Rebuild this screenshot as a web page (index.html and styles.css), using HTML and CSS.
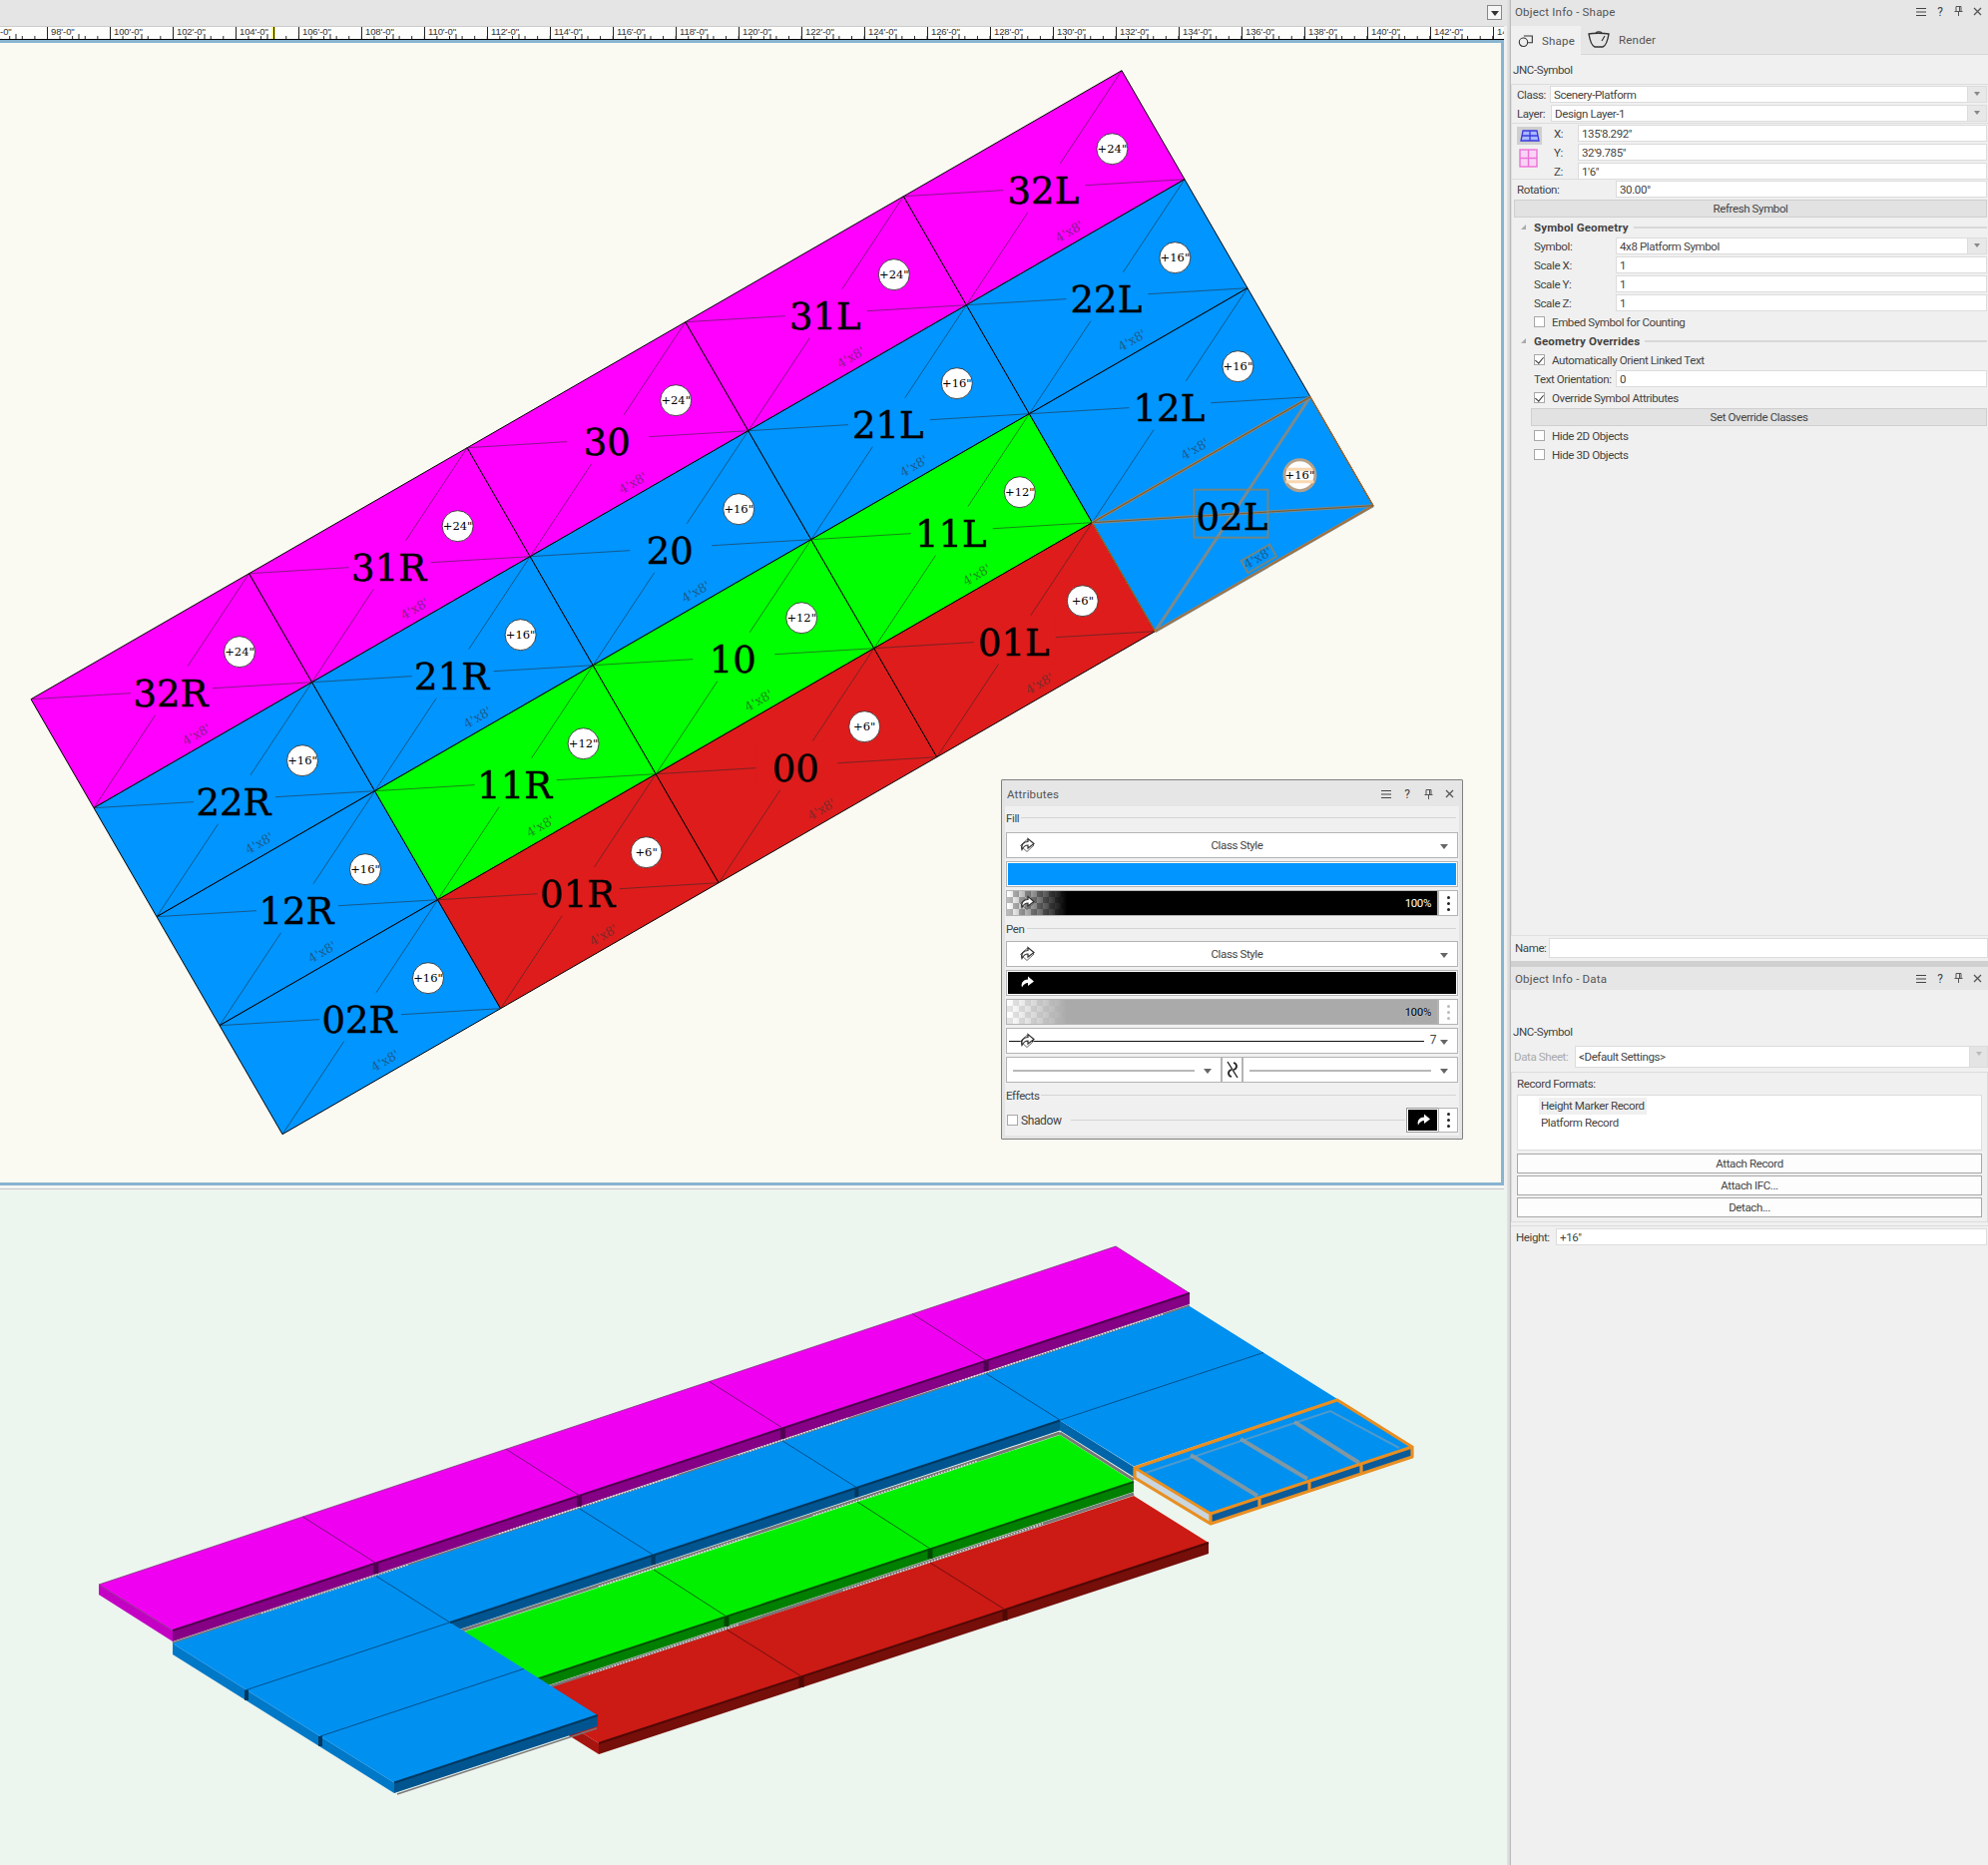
FILE: index.html
```html
<!DOCTYPE html>
<html lang="en">
<head>
    <meta charset="UTF-8">
    <title>Platform layout - Object Info</title>
    <link rel="stylesheet" href="styles.css">
</head>
<body>
<svg class="defs" width="0" height="0">
    <defs>
        <g id="cellBase">
            <polygon class="cell-face" points="0,0 218.600,-126 281.600,-17 63,109"/>
            <line class="cell-diag" x1="0" y1="0" x2="281.600" y2="-17"/>
            <line class="cell-diag" x1="218.600" y1="-126" x2="63" y2="109"/>
            <rect class="cell-knock" x="100" y="-33" width="82" height="49"/>
        </g>
        <g id="cellTag"><circle class="cell-ring" cx="209" cy="-47.500" r="15.500"/></g>
        <g id="byClass">
            <path d="M1.500 8.500 8 2.500 15 8 8 14.500Z" fill="none" stroke="#666" stroke-width="1"/>
            <path d="M3 12.500C1.500 7.500 5 4.500 9 4.500V1.500L15 6.500 9 11V8C6.500 8 4.500 9.500 3 12.500Z" fill="#fff" stroke="#333" stroke-width="1.200"/>
        </g>
        <g id="byClassWhite">
            <path d="M3 12.500C1.500 7.500 5 4.500 9 4.500V1.500L15 6.500 9 11V8C6.500 8 4.500 9.500 3 12.500Z" fill="#fff"/>
        </g>
        <g id="menuIcon"><path d="M0 1.500H10M0 5H10M0 8.500H10" stroke="#444" stroke-width="1.100" fill="none"/></g>
        <g id="pinIcon"><path d="M2 0.500H7V5.500H2ZM0.500 5.500H8.500M4.500 5.500V10M5.500 0.500V5" stroke="#555" stroke-width="1" fill="none"/></g>
        <g id="closeIcon"><path d="M1 1 8 8M8 1 1 8" stroke="#555" stroke-width="1.300" fill="none"/></g>
    </defs>
</svg>

<div class="app">
    <div class="views">
        <div class="topbar"><span class="topbar-btn"></span></div>
        <div class="ruler">
            <span>96'-0"</span><span>98'-0"</span><span>100'-0"</span><span>102'-0"</span><span>104'-0"</span><span>106'-0"</span><span>108'-0"</span><span>110'-0"</span><span>112'-0"</span><span>114'-0"</span><span>116'-0"</span><span>118'-0"</span><span>120'-0"</span><span>122'-0"</span><span>124'-0"</span><span>126'-0"</span><span>128'-0"</span><span>130'-0"</span><span>132'-0"</span><span>134'-0"</span><span>136'-0"</span><span>138'-0"</span><span>140'-0"</span><span>142'-0"</span><span>144'-0"</span>
            <i class="ruler-mark"></i>
        </div>
        <div class="plan">
            <svg class="plan-svg" viewBox="0 43 1504 1142" width="1504" height="1142">
                <g class="cell mag" transform="translate(31 700.700)"><use href="#cellBase"/><use href="#cellTag"/><text class="lbl" x="140" y="7">32R</text><text class="tag" x="209" y="-43.500">+24"</text><text class="size" transform="translate(168 39) rotate(-30)">4'x8'</text></g>
                <g class="cell mag" transform="translate(249.600 574.700)"><use href="#cellBase"/><use href="#cellTag"/><text class="lbl" x="140" y="7">31R</text><text class="tag" x="209" y="-43.500">+24"</text><text class="size" transform="translate(168 39) rotate(-30)">4'x8'</text></g>
                <g class="cell mag" transform="translate(468.200 448.700)"><use href="#cellBase"/><use href="#cellTag"/><text class="lbl" x="140" y="7">30</text><text class="tag" x="209" y="-43.500">+24"</text><text class="size" transform="translate(168 39) rotate(-30)">4'x8'</text></g>
                <g class="cell mag" transform="translate(686.800 322.700)"><use href="#cellBase"/><use href="#cellTag"/><text class="lbl" x="140" y="7">31L</text><text class="tag" x="209" y="-43.500">+24"</text><text class="size" transform="translate(168 39) rotate(-30)">4'x8'</text></g>
                <g class="cell mag" transform="translate(905.400 196.700)"><use href="#cellBase"/><use href="#cellTag"/><text class="lbl" x="140" y="7">32L</text><text class="tag" x="209" y="-43.500">+24"</text><text class="size" transform="translate(168 39) rotate(-30)">4'x8'</text></g>

                <g class="cell blu" transform="translate(94 809.700)"><use href="#cellBase"/><use href="#cellTag"/><text class="lbl" x="140" y="7">22R</text><text class="tag" x="209" y="-43.500">+16"</text><text class="size" transform="translate(168 39) rotate(-30)">4'x8'</text></g>
                <g class="cell blu" transform="translate(312.600 683.700)"><use href="#cellBase"/><use href="#cellTag"/><text class="lbl" x="140" y="7">21R</text><text class="tag" x="209" y="-43.500">+16"</text><text class="size" transform="translate(168 39) rotate(-30)">4'x8'</text></g>
                <g class="cell blu" transform="translate(531.200 557.700)"><use href="#cellBase"/><use href="#cellTag"/><text class="lbl" x="140" y="7">20</text><text class="tag" x="209" y="-43.500">+16"</text><text class="size" transform="translate(168 39) rotate(-30)">4'x8'</text></g>
                <g class="cell blu" transform="translate(749.800 431.700)"><use href="#cellBase"/><use href="#cellTag"/><text class="lbl" x="140" y="7">21L</text><text class="tag" x="209" y="-43.500">+16"</text><text class="size" transform="translate(168 39) rotate(-30)">4'x8'</text></g>
                <g class="cell blu" transform="translate(968.400 305.700)"><use href="#cellBase"/><use href="#cellTag"/><text class="lbl" x="140" y="7">22L</text><text class="tag" x="209" y="-43.500">+16"</text><text class="size" transform="translate(168 39) rotate(-30)">4'x8'</text></g>

                <g class="cell blu" transform="translate(157 918.700)"><use href="#cellBase"/><use href="#cellTag"/><text class="lbl" x="140" y="7">12R</text><text class="tag" x="209" y="-43.500">+16"</text><text class="size" transform="translate(168 39) rotate(-30)">4'x8'</text></g>
                <g class="cell grn" transform="translate(375.600 792.700)"><use href="#cellBase"/><use href="#cellTag"/><text class="lbl" x="140" y="7">11R</text><text class="tag" x="209" y="-43.500">+12"</text><text class="size" transform="translate(168 39) rotate(-30)">4'x8'</text></g>
                <g class="cell grn" transform="translate(594.200 666.700)"><use href="#cellBase"/><use href="#cellTag"/><text class="lbl" x="140" y="7">10</text><text class="tag" x="209" y="-43.500">+12"</text><text class="size" transform="translate(168 39) rotate(-30)">4'x8'</text></g>
                <g class="cell grn" transform="translate(812.800 540.700)"><use href="#cellBase"/><use href="#cellTag"/><text class="lbl" x="140" y="7">11L</text><text class="tag" x="209" y="-43.500">+12"</text><text class="size" transform="translate(168 39) rotate(-30)">4'x8'</text></g>
                <g class="cell blu" transform="translate(1031.400 414.700)"><use href="#cellBase"/><use href="#cellTag"/><text class="lbl" x="140" y="7">12L</text><text class="tag" x="209" y="-43.500">+16"</text><text class="size" transform="translate(168 39) rotate(-30)">4'x8'</text></g>

                <g class="cell blu" transform="translate(220 1027.700)"><use href="#cellBase"/><use href="#cellTag"/><text class="lbl" x="140" y="7">02R</text><text class="tag" x="209" y="-43.500">+16"</text><text class="size" transform="translate(168 39) rotate(-30)">4'x8'</text></g>
                <g class="cell red" transform="translate(438.600 901.700)"><use href="#cellBase"/><use href="#cellTag"/><text class="lbl" x="140" y="7">01R</text><text class="tag" x="209" y="-43.500">+6"</text><text class="size" transform="translate(168 39) rotate(-30)">4'x8'</text></g>
                <g class="cell red" transform="translate(657.200 775.700)"><use href="#cellBase"/><use href="#cellTag"/><text class="lbl" x="140" y="7">00</text><text class="tag" x="209" y="-43.500">+6"</text><text class="size" transform="translate(168 39) rotate(-30)">4'x8'</text></g>
                <g class="cell red" transform="translate(875.800 649.700)"><use href="#cellBase"/><use href="#cellTag"/><text class="lbl" x="140" y="7">01L</text><text class="tag" x="209" y="-43.500">+6"</text><text class="size" transform="translate(168 39) rotate(-30)">4'x8'</text></g>

                <!-- selected platform -->
                <g class="cell blu picked" transform="translate(1094.400 523.700)">
                    <polygon class="cell-face" points="0,0 218.600,-126 281.600,-17 63,109"/>
                    <line class="pick-diag" x1="0" y1="0" x2="218.600" y2="-126"/>
                    <line class="pick-diag" x1="0" y1="0" x2="281.600" y2="-17"/>
                    <line class="pick-diag" x1="218.600" y1="-126" x2="63" y2="109"/>
                    <line class="pick-diag" x1="281.600" y1="-17" x2="63" y2="109"/>
                    <polygon class="pick-edge" points="0,0 218.600,-126 281.600,-17 63,109"/>
                    <path class="pick-dark" d="M0 0 218.600 -126M0 0 281.600 -17"/>
                    <rect class="pick-box" x="102" y="-33" width="74" height="48"/>
                    <text class="lbl" x="140" y="7">02L</text>
                    <g transform="translate(168 39) rotate(-30)"><rect class="pick-box" x="-16" y="-10" width="33" height="14"/><text class="size">4'x8'</text></g>
                    <circle class="pick-ring" cx="208" cy="-47.500" r="15.500"/>
                    <path class="pick-stripe" d="M195 -53.500H221M194 -41H222"/>
                    <text class="tag" x="208" y="-43.500">+16"</text>
                </g>
            </svg>

            <div class="attrs">
                <div class="palette-title attrs-title">
                    <span class="attrs-name">Attributes</span>
                    <span class="win-icons win-icons-wide">
                        <svg width="10" height="10"><use href="#menuIcon"/></svg><b>?</b>
                        <svg width="10" height="11"><use href="#pinIcon"/></svg>
                        <svg width="10" height="10"><use href="#closeIcon"/></svg>
                    </span>
                </div>
                <div class="attrs-body">
                    <div class="attr-head attr-head-first"><span>Fill</span><i></i></div>
                    <div class="attr-box attr-drop"><svg class="cls-ic" width="16" height="16"><use href="#byClass"/></svg><span class="attr-mid">Class Style</span><i class="caret"></i></div>
                    <div class="attr-box attr-color"><div class="swatch swatch-blue"></div></div>
                    <div class="attr-split">
                        <div class="attr-box attr-fade fade-black"><svg class="cls-ic" width="16" height="16"><use href="#byClass"/></svg><span class="pct">100%</span></div>
                        <div class="attr-box kebab"><i></i><i></i><i></i></div>
                    </div>
                    <div class="attr-head"><span>Pen</span><i></i></div>
                    <div class="attr-box attr-drop"><svg class="cls-ic" width="16" height="16"><use href="#byClass"/></svg><span class="attr-mid">Class Style</span><i class="caret"></i></div>
                    <div class="attr-box attr-color"><div class="swatch swatch-black"><svg class="cls-ic" width="16" height="16"><use href="#byClassWhite"/></svg></div></div>
                    <div class="attr-split">
                        <div class="attr-box attr-fade fade-grey"><span class="pct pct-out">100%</span></div>
                        <div class="attr-box kebab kebab-off"><i></i><i></i><i></i></div>
                    </div>
                    <div class="attr-box attr-weight"><span class="weight-line"></span><svg class="cls-ic" width="16" height="16"><use href="#byClass"/></svg><span class="weight-val">7</span><i class="caret"></i></div>
                    <div class="attr-ends">
                        <div class="attr-box attr-end"><span class="end-line"></span><i class="caret"></i></div>
                        <div class="attr-box end-link">
                            <svg width="14" height="20" viewBox="0 0 14 20"><path d="M2 2 12 18" fill="none" stroke="#222" stroke-width="1.400"/><path d="M8 3C12 4 12 9 8 10M6 17C2 16 2 11 6 10" fill="none" stroke="#222" stroke-width="1.800"/></svg>
                        </div>
                        <div class="attr-box attr-end"><span class="end-line"></span><i class="caret"></i></div>
                    </div>
                    <div class="attr-head"><span>Effects</span><i></i></div>
                    <div class="shadow-row">
                        <span class="check check-attr"></span><span class="shadow-name">Shadow</span><i class="shadow-line"></i>
                        <div class="attr-box shadow-swatch"><svg width="16" height="16"><use href="#byClassWhite"/></svg></div>
                        <div class="attr-box kebab"><i></i><i></i><i></i></div>
                    </div>
                </div>
            </div>
        </div>
        <div class="view-gap"></div>
        <div class="model">
            <svg class="model-svg" viewBox="0 1192 1510 677" width="1510" height="677">
                <!-- magenta row -->
                <polygon fill="#c400c4" points="99,1588 173,1634 173,1645 99,1598"/>
                <polygon fill="#850085" points="173,1634 1192,1296 1192,1307 173,1645"/>
                <polygon fill="#f000f0" stroke="#7a3a7a" stroke-width=".8" points="99,1588 1118,1249 1192,1296 173,1634"/>
                <path class="edge-mag" d="M173 1634 1192 1296"/>
                <path class="div-mag" d="M303.600 1520.200 376.800 1566.400M507.200 1452.400 580.600 1498.800M710.800 1384.600 784.400 1431.200M914.400 1316.800 988.200 1363.600"/>
                <path class="notch-mag" d="M376.800 1566.400V1577M580.600 1498.800V1510M784.400 1431.200V1442M988.200 1363.600V1374"/>
                <path class="band" d="M173 1647 1192 1309"/>
                <path class="band-dots" d="M262 1617 410 1568M500 1537 680 1478M740 1458 850 1421M950 1388 1165 1317"/>

                <!-- lower rows, blue goes over them -->
                <path class="band" d="M451 1638 1062 1436"/>
                <path class="band-dots" d="M600 1590 750 1540M815 1519 980 1464"/>
                <path class="band" d="M1062 1436 1136 1483"/>
                <polygon fill="#008000" points="525,1687 1136,1485 1136,1495 525,1697"/>
                <polygon fill="#00f000" points="451,1640 1062,1438 1136,1485 525,1687"/>
                <path class="edge-grn" d="M525 1687 1136 1485"/>
                <path class="div-grn" d="M655 1573 728 1620M859 1505 932 1552"/>
                <path class="notch-grn" d="M728 1620V1630M932 1552V1562"/>
                <path class="band" d="M525 1699 1136 1497"/>
                <path class="band-dots" d="M590 1678 740 1628M845 1594 980 1549 1045 1527"/>
                <polygon fill="#a61410" points="525,1700 600,1747 600,1758 525,1711"/>
                <polygon fill="#760e0a" points="600,1747 1211,1546 1211,1557 600,1758"/>
                <polygon fill="#cc1a14" points="525,1700 1136,1499 1211,1546 600,1747"/>
                <path class="edge-red" d="M600 1747 1211 1546"/>
                <path class="div-red" d="M728 1633 803 1680M932 1566 1007 1613"/>
                <path class="notch-red" d="M803 1680V1691M1007 1613V1624"/>

                <!-- blue L -->
                <polygon fill="#0078c8" points="173,1647 395,1786.500 395,1797 173,1658"/>
                <path class="band band-thin" d="M398 1798 598 1732"/>
                <polygon fill="#005590" points="395,1786.500 598.800,1719 598.800,1730 395,1797"/>
                <polygon fill="#005590" points="451,1626 1062,1423.500 1062,1433.500 451,1636"/>
                <polygon fill="#0064a8" points="1062,1423.500 1136,1470 1136,1480 1062,1433.500"/>
                <polygon fill="#0090f0" points="173,1647 1192,1309 1340,1402 1136,1469.600 1062,1423.500 451,1626 598.800,1719 395,1786.500"/>
                <path class="edge-blu" d="M395 1786.500 598.800 1719M451 1626 1062 1423.500"/>
                <path class="div-blu" d="M376.800 1579.400 450.800 1625.900M580.600 1511.800 654.600 1558.300M784.400 1444.200 858.400 1490.700M988.200 1376.600 1062.200 1423.100M247 1693.500 450.800 1625.900M321 1740 524.800 1672.400M1062.200 1423.100 1266 1355.500"/>
                <path class="notch-blu" d="M247 1693.500V1704M321 1740V1750M654.600 1558.300V1568M858.400 1490.700V1500"/>

                <!-- selected platform -->
                <polygon fill="#c9d6de" points="1137,1471 1213,1517 1213,1527 1137,1481"/>
                <polygon fill="#0b5a9a" points="1213,1517 1415,1450 1415,1460 1213,1527"/>
                <polygon fill="#0090f0" points="1137,1471 1340,1403 1415,1450 1213,1517"/>
                <path class="pick-bars" d="M1193 1458 1260 1499M1243 1442 1310 1482M1297 1425 1362 1466"/>
                <path class="pick-inner" d="M1148 1476 1333 1414 1402 1451"/>
                <path class="pick-wire" d="M1137 1471 1340 1403 1415 1450 1213 1517ZM1137 1471V1481L1213 1527 1415 1460V1450M1213 1517V1527M1262 1501V1511M1312 1484V1494M1364 1467V1477"/>
            </svg>
        </div>
    </div>

    <div class="strip"></div>

    <div class="panels">
        <section class="shape-panel">
            <div class="palette-title">
                <span class="palette-name">Object Info - Shape</span>
                <span class="win-icons">
                    <svg width="10" height="10"><use href="#menuIcon"/></svg><b>?</b>
                    <svg width="10" height="11"><use href="#pinIcon"/></svg>
                    <svg width="10" height="10"><use href="#closeIcon"/></svg>
                </span>
            </div>
            <div class="tabs">
                <div class="tab tab-on">
                    <svg width="19" height="16" viewBox="0 0 19 16"><circle cx="6.500" cy="9.500" r="5" fill="none" stroke="#333" stroke-width="1.300"/><path d="M7 2H17V10H12" fill="none" stroke="#333" stroke-width="1.300"/></svg>
                    <span>Shape</span>
                </div>
                <div class="tab">
                    <svg width="24" height="18" viewBox="0 0 24 18"><path d="M2 3C6 2 17 2 22 3 21 9 19 15 16 16H8C5 15 3 9 2 3Z" fill="none" stroke="#333" stroke-width="1.400"/><path d="M9 2C10 .5 14 .5 15 2M18 5 15 10" fill="none" stroke="#333" stroke-width="1.200"/></svg>
                    <span>Render</span>
                </div>
            </div>
            <div class="obj-name">JNC-Symbol</div>

            <div class="props">
                <div class="row"><span class="lab lab-cl">Class:</span><div class="field">Scenery-Platform<i class="fdrop"></i></div></div>
                <div class="row"><span class="lab lab-ly">Layer:</span><div class="field">Design Layer-1<i class="fdrop"></i></div></div>
                <div class="xyz">
                    <div class="xyz-icons">
                        <span class="view-ic view-ic-on"><svg width="20" height="12" viewBox="0 0 20 12"><path d="M3 1H17L19 11H1ZM10 1V11M2 6H18" fill="#a8b8ff" stroke="#3a3ae0" stroke-width="1.300"/></svg></span>
                        <span class="view-ic"><svg width="19" height="19" viewBox="0 0 19 19"><rect x="1" y="1" width="17" height="17" fill="#f8d4f4" stroke="#ee70d8" stroke-width="1.400"/><path d="M9.500 1V18M1 9.500H18" stroke="#ee70d8" stroke-width="1.400"/></svg></span>
                    </div>
                    <div class="xyz-rows">
                        <div class="row"><span class="lab lab-xyz">X:</span><div class="field">135'8.292"</div></div>
                        <div class="row"><span class="lab lab-xyz">Y:</span><div class="field">32'9.785"</div></div>
                        <div class="row"><span class="lab lab-xyz">Z:</span><div class="field">1'6"</div></div>
                    </div>
                </div>
                <div class="row"><span class="lab lab-wide">Rotation:</span><div class="field">30.00°</div></div>
                <div class="row"><div class="act act-full">Refresh Symbol</div></div>

                <div class="row sect"><i class="twisty"></i><b>Symbol Geometry</b><i class="sect-line"></i></div>
                <div class="row"><span class="lab lab-in">Symbol:</span><div class="field">4x8 Platform Symbol<i class="fdrop"></i></div></div>
                <div class="row"><span class="lab lab-in">Scale X:</span><div class="field">1</div></div>
                <div class="row"><span class="lab lab-in">Scale Y:</span><div class="field">1</div></div>
                <div class="row"><span class="lab lab-in">Scale Z:</span><div class="field">1</div></div>
                <div class="row chk"><span class="check"></span>Embed Symbol for Counting</div>

                <div class="row sect"><i class="twisty"></i><b>Geometry Overrides</b><i class="sect-line"></i></div>
                <div class="row chk"><span class="check check-on"></span>Automatically Orient Linked Text</div>
                <div class="row"><span class="lab lab-in">Text Orientation:</span><div class="field">0</div></div>
                <div class="row chk"><span class="check check-on"></span>Override Symbol Attributes</div>
                <div class="row"><div class="act act-in">Set Override Classes</div></div>
                <div class="row chk"><span class="check"></span>Hide 2D Objects</div>
                <div class="row chk"><span class="check"></span>Hide 3D Objects</div>
            </div>

            <div class="name-row"><span class="name-lab">Name:</span><div class="field field-tall"></div></div>
        </section>

        <div class="panel-split"></div>

        <section class="data-panel">
            <div class="palette-title palette-title-2">
                <span class="palette-name">Object Info - Data</span>
                <span class="win-icons">
                    <svg width="10" height="10"><use href="#menuIcon"/></svg><b>?</b>
                    <svg width="10" height="11"><use href="#pinIcon"/></svg>
                    <svg width="10" height="10"><use href="#closeIcon"/></svg>
                </span>
            </div>
            <div class="obj-name obj-name-2">JNC-Symbol</div>
            <div class="sheet-row"><span class="sheet-lab">Data Sheet:</span><div class="field sheet-field">&lt;Default Settings&gt;<i class="fdrop fdrop-off"></i></div></div>
            <div class="records">
                <div class="rec-head">Record Formats:</div>
                <div class="rec-list">
                    <div class="rec-item rec-item-on">Height Marker Record</div>
                    <div class="rec-item">Platform Record</div>
                </div>
                <div class="rec-btn">Attach Record</div>
                <div class="rec-btn">Attach IFC...</div>
                <div class="rec-btn">Detach...</div>
            </div>
            <div class="height-row"><span class="name-lab">Height:</span><div class="field height-field">+16"</div></div>
        </section>
    </div>
</div>
</body>
</html>
```
FILE: styles.css
```css
* { box-sizing: border-box; }
html, body { margin: 0; padding: 0; }
body { width: 1992px; height: 1869px; overflow: hidden; font-family: Roboto, "Liberation Sans", sans-serif; font-size: 11.5px; letter-spacing: -.38px; color: #444; background: #f0f0f0; white-space: nowrap; }
.defs { position: absolute; }
.app { display: flex; height: 1869px; }

/* left side: ruler, plan and model views */
.views { width: 1510px; display: flex; flex-direction: column; }
.topbar { height: 26px; background: #e5e5e5; display: flex; justify-content: flex-end; padding: 5px 5px 0 0; }
.topbar-btn { width: 15px; height: 15px; background: #f6f6f6; border: 1px solid #888; position: relative; }
.topbar-btn::after { content: ""; position: absolute; left: 3px; top: 5px; border: 4px solid transparent; border-top: 5px solid #333; }
.ruler { height: 14px; width: 1507px; display: flex; overflow: hidden; position: relative; background-color: #fdfdfb; border-top: 1px solid #ccc; border-bottom: 1px solid #000;
    background-image: linear-gradient(to right, #222 1px, transparent 1px), linear-gradient(to right, #222 1px, transparent 1px);
    background-size: 12.6px 3px, 31.5px 5px; background-position: 47px bottom, 47px bottom; background-repeat: repeat-x; }
.ruler span { flex: 0 0 63px; font: 9.5px "Liberation Sans", sans-serif; letter-spacing: -.1px; line-height: 10px; padding-left: 3px; border-left: 1px solid #222; color: #333; transform: translateX(-16px); }
.ruler-mark { position: absolute; left: 272px; top: 0; width: 4px; height: 14px; background: #f2ee40; border-left: 1px solid #eee; }
.ruler-mark::after { content: ""; position: absolute; left: 1px; top: 0; width: 1px; height: 14px; background: #111; }

.plan { position: relative; width: 1507px; height: 1148px; border: 3px solid #88b4d0; border-left: 0; background: #fafaf3; overflow: hidden; }
.plan-svg { display: block; }
.view-gap { height: 4px; background: #f4f6f4; border-bottom: 1px solid #c8c8c8; width: 1507px; }
.model { flex: 1; width: 1510px; background: #ecf5ee; }
.model-svg { display: block; }

/* plan cells */
.cell-face { stroke: #000; stroke-width: 1; }
.cell-diag { stroke: rgba(40, 40, 40, .55); stroke-width: 1; }
.cell-knock { stroke: none; }
.mag { fill: #ff00ff; }
.blu { fill: #0095ff; }
.grn { fill: #00ff00; }
.red { fill: #de1c1c; }
.cell-ring { fill: #fff; stroke: #222; stroke-width: .8; }
.lbl { font: 37px "DejaVu Serif", "Liberation Serif", serif; letter-spacing: 0; fill: #000; stroke: #000; stroke-width: .5; text-anchor: middle; }
.tag { font: 11.5px "DejaVu Serif", "Liberation Serif", serif; letter-spacing: 0; fill: #000; text-anchor: middle; }
.size { font: 12.5px "DejaVu Serif", "Liberation Serif", serif; letter-spacing: 0; fill: rgba(50, 50, 50, .6); text-anchor: middle; }
.pick-diag { stroke: #7a8a8e; stroke-width: 3; }
.pick-edge { fill: none; stroke: #b56a1e; stroke-width: 1.200; }
.pick-dark { fill: none; stroke: #7a5a2a; stroke-width: 1; }
.pick-box { fill: none; stroke: rgba(140, 130, 100, .8); stroke-width: 2; }
.pick-ring { fill: #fff; stroke: #b5a088; stroke-width: 3; }
.pick-stripe { stroke: #f8d8b0; stroke-width: 3; fill: none; }

/* 3D view */
.band { stroke: #777; stroke-width: 3; fill: none; }
.band-thin { stroke-width: 1.500; }
.band-dots { stroke: #e8e8e8; stroke-width: 1.500; stroke-dasharray: 1.500 1.500; fill: none; }
.edge-mag { stroke: #500050; stroke-width: 2; fill: none; }
.div-mag { stroke: #7a1080; stroke-width: 1; fill: none; }
.notch-mag { stroke: #500050; stroke-width: 5; fill: none; }
.edge-grn { stroke: #005000; stroke-width: 2; fill: none; }
.div-grn { stroke: #0a6a10; stroke-width: 1; fill: none; }
.notch-grn { stroke: #004800; stroke-width: 5; fill: none; }
.edge-red { stroke: #500805; stroke-width: 2; fill: none; }
.div-red { stroke: #701010; stroke-width: 1; fill: none; }
.notch-red { stroke: #500805; stroke-width: 5; fill: none; }
.edge-blu { stroke: #00385f; stroke-width: 2; fill: none; }
.div-blu { stroke: #00518a; stroke-width: 1; fill: none; }
.notch-blu { stroke: #00385f; stroke-width: 4; fill: none; }
.pick-bars { stroke: #7f98a4; stroke-width: 4; fill: none; }
.pick-inner { stroke: rgba(130, 160, 180, .6); stroke-width: 2; fill: none; }
.pick-wire { stroke: #e88f22; stroke-width: 3.200; fill: none; stroke-linejoin: round; }

/* floating attributes palette */
.attrs { position: absolute; left: 1003px; top: 738px; width: 463px; height: 361px; background: #e4e4e4; border: 1px solid #808080; border-radius: 1px; padding: 0 3px 3px; display: flex; flex-direction: column; }
.palette-title { display: flex; align-items: center; justify-content: space-between; background: #e6e6e6; }
.attrs-title { height: 26px; padding: 2px 4px 0 2px; flex: none; }
.attrs-name, .palette-name { letter-spacing: .2px; font-size: 11.5px; color: #555; }
.win-icons { display: flex; align-items: center; gap: 9px; }
.win-icons-wide { gap: 11.500px; }
.win-icons b { font-weight: 400; font-size: 12px; width: 10px; text-align: center; color: #444; }
.attrs-body { flex: 1; background: #f0f0f0; display: flex; flex-direction: column; gap: 3px; padding: 0 1px; }
.attr-head { height: 19px; display: flex; align-items: center; gap: 2px; flex: none; }
.attr-head-first { height: 23px; }
.attr-head i { flex: 1; height: 1px; background: #d4d4d4; margin-right: 2px; }
.attr-box { height: 26px; background: #fff; border: 1px solid #b4b4b4; flex: none; position: relative; display: flex; align-items: center; }
.attr-drop { justify-content: center; padding-left: 10px; }
.attr-mid { color: #444; }
.cls-ic { position: absolute; left: 12px; top: 4px; }
.caret { position: absolute; right: 9px; top: 11px; border: 4.500px solid transparent; border-top: 5px solid #666; border-bottom: 0; }
.attr-color { padding: 1px; }
.swatch { width: 100%; height: 100%; position: relative; }
.swatch-blue { background: #0095ff; }
.swatch-black { background: #000; }
.swatch .cls-ic { left: 11px; top: 3px; }
.attr-split { display: flex; height: 26px; flex: none; }
.attr-fade { flex: 1; padding: 1px; }
.fade-black { background: linear-gradient(90deg, rgba(0, 0, 0, 0) 1px, #000 60px), repeating-conic-gradient(#bbb 0 25%, #fff 0 50%) 0 0 / 12px 12px; }
.fade-grey { background: linear-gradient(90deg, rgba(170, 170, 170, 0) 1px, #aaa 60px), repeating-conic-gradient(#e4e4e4 0 25%, #fff 0 50%) 0 0 / 12px 12px; }
.pct { margin-left: auto; margin-right: 5px; color: #fff; font-size: 11.500px; }
.pct-out { color: #111; text-shadow: 0 0 1px #fff; font-weight: 500; }
.kebab { width: 20px; flex-direction: column; justify-content: center; gap: 3px; }
.kebab i { width: 3px; height: 3px; background: #222; border-radius: 50%; }
.kebab-off i { background: #bbb; }
.weight-line { position: absolute; left: 2px; width: 416px; height: 1px; background: #111; top: 12px; }
.weight-val { position: absolute; right: 21px; top: 4px; font-size: 12px; }
.attr-ends { display: flex; flex: none; }
.attr-end { flex: 1; }
.end-line { position: absolute; left: 6px; right: 26px; top: 12px; height: 2px; background: #b8b8b8; }
.end-link { width: 21px; justify-content: center; }
.shadow-row { display: flex; align-items: center; height: 25px; flex: none; }
.check { display: inline-block; width: 11px; height: 11px; background: #fff; border: 1px solid #a8a8a8; flex: none; position: relative; }
.check-attr { margin: 0 3px 0 1px; }
.shadow-name { font-size: 12px; }
.shadow-line { flex: 1; height: 1px; background: #d4d4d4; margin: 0 1px 0 9px; }
.shadow-swatch { width: 32px; height: 25px; border: 1px solid #999; background: #000; justify-content: center; border-right: 0; box-shadow: inset 0 0 0 1px #fff; }
.shadow-row .kebab { height: 25px; }

.strip { width: 4px; background: linear-gradient(90deg, #e4e4e4, #d4d4d4); border-right: 1px solid #bbb; }

/* object info panels */
.panels { width: 478px; display: flex; flex-direction: column; background: #f0f0f0; }
.shape-panel { height: 963px; display: flex; flex-direction: column; }
.shape-panel > .palette-title { height: 26px; padding: 0 5px 3px 4px; flex: none; }
.tabs { height: 29px; display: flex; background: #e6e6e6; border-bottom: 1px solid #d6d6d6; flex: none; }
.tab { display: flex; align-items: center; gap: 8px; padding: 0 6px; letter-spacing: .2px; font-size: 11.500px; color: #555; }
.tab-on { width: 70px; background: #f0f0f0; padding-left: 7px; height: 29px; }
.obj-name { height: 29px; padding-left: 2px; display: flex; align-items: center; flex: none; }
.props { border-top: 1px solid #dcdcdc; padding: 0 1px; flex: 1; border-left: 1px solid #e0e0e0; border-bottom: 1px solid #e0e0e0; }
.row { height: 19px; display: flex; align-items: center; }
.lab { flex: none; padding-left: 4px; }
.lab-cl { width: 37px; }
.lab-ly { width: 38px; }
.lab-xyz { width: 24px; padding-left: 0; }
.lab-wide { width: 103px; }
.lab-in { width: 103px; padding-left: 21px; }
.field { flex: 1; height: 17px; background: #fff; border: 1px solid #dcdcdc; display: flex; align-items: center; padding-left: 3px; position: relative; }
.fdrop { position: absolute; right: 0; top: 0; bottom: 0; width: 19px; background: #e8e8e8; border-left: 1px solid #dcdcdc; }
.fdrop::after { content: ""; position: absolute; left: 6px; top: 5px; border: 3px solid transparent; border-top: 4px solid #888; border-bottom: 0; }
.fdrop-off { background: #e4e4e4; width: 18px; }
.fdrop-off::after { border-top-color: #bbb; }
.xyz { display: flex; border-top: 1px solid #dcdcdc; border-bottom: 1px solid #dcdcdc; margin: 0 -1px; height: 57px; }
.xyz-icons { width: 42px; padding: 3px 0 0 5px; display: flex; flex-direction: column; gap: 4px; }
.view-ic { width: 25px; height: 18px; display: flex; align-items: center; justify-content: center; }
.view-ic-on { background: #cfcfcf; }
.view-ic:last-child { height: 19px; width: 20px; margin-left: 1px; }
.xyz-rows { flex: 1; padding-right: 1px; }
.act { height: 18px; background: #e2e2e2; border: 1px solid #cfcfcf; display: flex; align-items: center; justify-content: center; flex: 1; }
.act-full { margin-left: 1px; }
.act-in { margin-left: 18px; }
.sect { padding-left: 8px; }
.sect b { font-weight: 700; color: #444; margin-left: 8px; letter-spacing: .15px; }
.twisty { width: 0; height: 0; border-left: 5px solid transparent; border-bottom: 5px solid #aaa; }
.sect-line { flex: 1; height: 2px; background: #d8d8d8; margin-left: 5px; }
.chk { padding-left: 21px; gap: 7px; }
.check-on::after { content: ""; position: absolute; left: 2px; top: 0; width: 4px; height: 7px; border-right: 1px solid #333; border-bottom: 1px solid #333; transform: rotate(40deg); }

.name-row { height: 25px; display: flex; align-items: center; padding: 0 0 1px 4px; flex: none; }
.name-lab { flex: none; }
.name-row .name-lab { width: 34px; }
.field-tall { height: 20px; }
.panel-split { height: 6px; background: #d0d0d0; flex: none; }
.data-panel { flex: 1; display: flex; flex-direction: column; }
.palette-title-2 { height: 23px; padding: 0 5px 0 4px; flex: none; }
.obj-name-2 { height: 56px; padding-top: 28px; }
.sheet-row { height: 22px; display: flex; align-items: center; padding-left: 3px; flex: none; }
.sheet-lab { width: 61px; color: #aaa; flex: none; }
.sheet-field { height: 22px; }
.records { margin: 4px 0 0; height: 151px; padding: 0 5px; border: 1px solid #dcdcdc; flex: none; }
.rec-head { height: 22px; display: flex; align-items: center; }
.rec-list { height: 56px; background: #fff; border: 1px solid #dcdcdc; padding: 2px 0 0 21px; margin-bottom: 3px; }
.rec-item { height: 17px; line-height: 16px; padding: 0 2px; width: max-content; }
.rec-item-on { background: #f0f0f0; }
.rec-btn { height: 20px; background: #fdfdfd; border: 1px solid #a8a8a8; display: flex; align-items: center; justify-content: center; margin-bottom: 2px; }
.height-row { display: flex; align-items: center; height: 22px; margin-top: 3px; padding: 0 1px 0 5px; border-top: 1px solid #dcdcdc; flex: none; }
.height-row .name-lab { width: 40px; }
```
